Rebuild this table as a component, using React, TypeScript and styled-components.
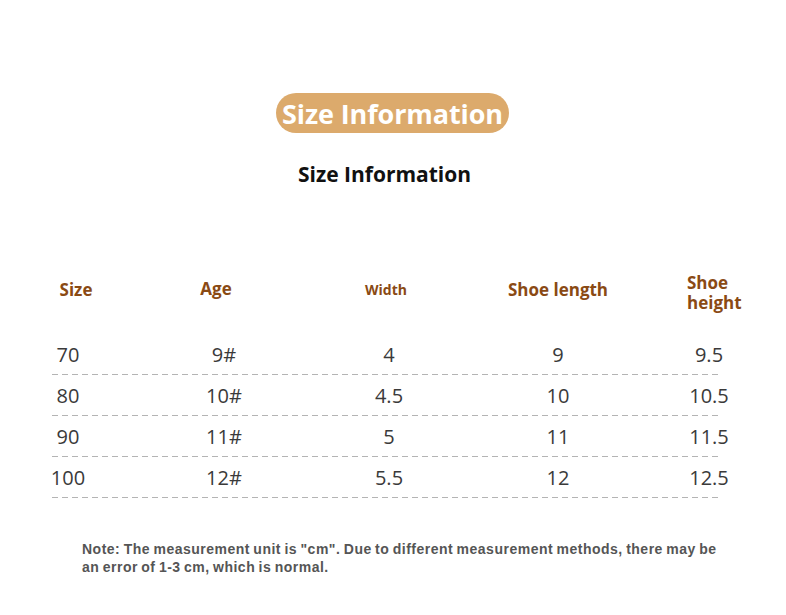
import React from "react";
import styled, { createGlobalStyle } from "styled-components";

const Global = createGlobalStyle`
  html, body { margin: 0; padding: 0; background: #ffffff; }
  body { font-family: "Open Sans", "Liberation Sans", sans-serif; }
`;

const Page = styled.div`
  width: 786px;
  height: 615px;
  box-sizing: border-box;
  padding-top: 93px;
  display: flex;
  flex-direction: column;
  align-items: center;
  background: #ffffff;
`;

const Pill = styled.div`
  height: 40px;
  width: 233px;
  border-radius: 20px;
  background: #dcaa6c;
  color: #ffffff;
  font-family: "Open Sans", sans-serif;
  font-weight: 700;
  font-size: 27px;
  letter-spacing: -0.1px;
  display: flex;
  align-items: center;
  justify-content: center;
  margin-right: 1px;
`;

const Title = styled.h1`
  margin: 27px 17px 0 0;
  height: 28px;
  line-height: 28px;
  font-family: "Open Sans", sans-serif;
  font-weight: 700;
  font-size: 21px;
  color: #111111;
`;

const Table = styled.div`
  align-self: flex-start;
  margin-left: 18px;
  margin-top: 77px;
  width: 732px;
  display: flex;
  flex-direction: column;
`;

const cols = "100px 212px 118px 220px 82px";

const HeaderRow = styled.div`
  display: grid;
  grid-template-columns: ${cols};
  height: 50px;
  align-items: center;
  margin-bottom: 19px;
`;

const HeadCell = styled.div<{ $size: number; $left?: boolean; $dy?: number; $dx?: number }>`
  font-family: "Open Sans", sans-serif;
  font-weight: 700;
  font-size: ${(p) => p.$size}px;
  line-height: 20px;
  color: #8a4a14;
  text-align: ${(p) => (p.$left ? "left" : "center")};
  padding-left: ${(p) => (p.$left ? "19px" : "0")};
  margin-top: ${(p) => p.$dy ?? 0}px;
  position: relative;
  left: ${(p) => p.$dx ?? 0}px;
`;

const Row = styled.div`
  display: grid;
  grid-template-columns: ${cols};
  height: 40px;
  align-items: center;
`;

const Cell = styled.div`
  font-family: "Open Sans", sans-serif;
  font-weight: 400;
  font-size: 20px;
  color: #3a3a3a;
  text-align: center;
`;

const Divider = styled.div`
  margin-left: 34px;
  width: 670px;
  height: 1px;
  background: repeating-linear-gradient(
    to right,
    #b4b4b4 0 6px,
    transparent 6px 10px
  );
`;

const Note = styled.p`
  align-self: flex-start;
  margin: 42px 0 0 82px;
  width: 645px;
  font-family: "Liberation Sans", sans-serif;
  font-weight: 700;
  font-size: 14px;
  line-height: 18px;
  letter-spacing: 0.5px;
  word-spacing: -1px;
  color: #555555;
`;

const rows = [
  ["70", "9#", "4", "9", "9.5"],
  ["80", "10#", "4.5", "10", "10.5"],
  ["90", "11#", "5", "11", "11.5"],
  ["100", "12#", "5.5", "12", "12.5"],
];

export default function App() {
  return (
    <>
      <Global />
      <Page>
        <Pill>Size Information</Pill>
        <Title>Size Information</Title>
        <Table>
          <HeaderRow>
            <HeadCell $size={17} $dx={8}>Size</HeadCell>
            <HeadCell $size={17} $dx={-8} $dy={-2}>Age</HeadCell>
            <HeadCell $size={14} $dx={-3}>Width</HeadCell>
            <HeadCell $size={17}>Shoe length</HeadCell>
            <HeadCell $size={17} $left $dy={6}>
              Shoe
              <br />
              height
            </HeadCell>
          </HeaderRow>
          {rows.map((r) => (
            <React.Fragment key={r[0]}>
              <Row>
                {r.map((v, i) => (
                  <Cell key={i}>{v}</Cell>
                ))}
              </Row>
              <Divider />
            </React.Fragment>
          ))}
        </Table>
        <Note>
          Note: The measurement unit is "cm". Due to different measurement methods, there may be an
          error of 1-3 cm, which is normal.
        </Note>
      </Page>
    </>
  );
}
